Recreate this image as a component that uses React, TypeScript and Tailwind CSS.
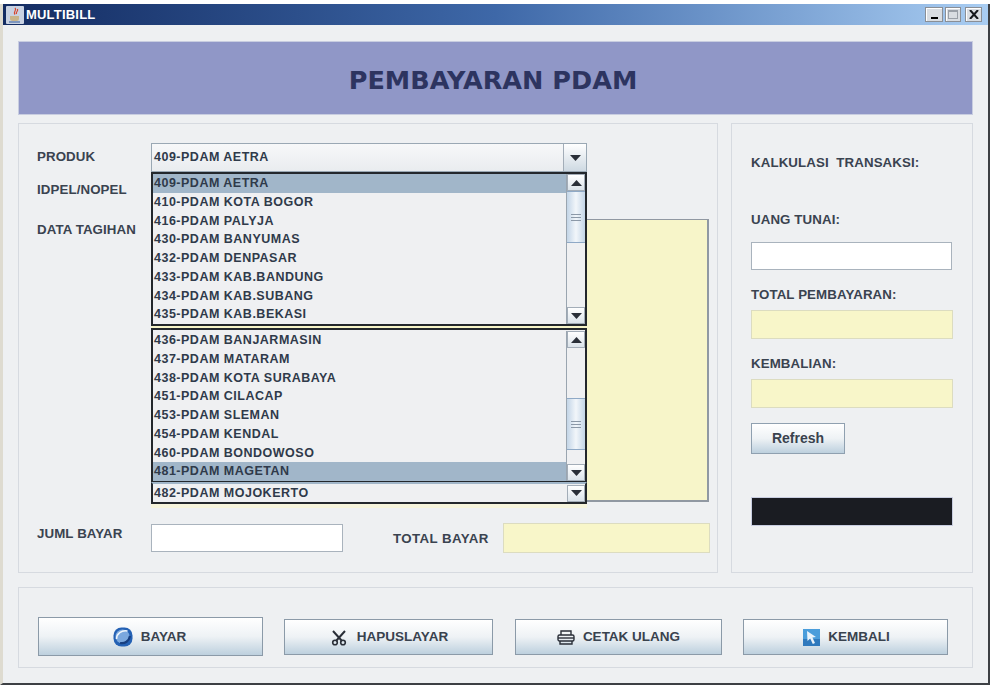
const firstList = [
  '409-PDAM AETRA',
  '410-PDAM KOTA BOGOR',
  '416-PDAM PALYJA',
  '430-PDAM BANYUMAS',
  '432-PDAM DENPASAR',
  '433-PDAM KAB.BANDUNG',
  '434-PDAM KAB.SUBANG',
  '435-PDAM KAB.BEKASI',
]

const secondList = [
  '436-PDAM BANJARMASIN',
  '437-PDAM MATARAM',
  '438-PDAM KOTA SURABAYA',
  '451-PDAM CILACAP',
  '453-PDAM SLEMAN',
  '454-PDAM KENDAL',
  '460-PDAM BONDOWOSO',
  '481-PDAM MAGETAN',
]

const itemText = 'text-[12.5px] font-bold tracking-[0.5px] text-[#2f3a4a] whitespace-nowrap'
const labelText = 'text-[13.3px] font-bold tracking-[0.1px] text-[#3a4350] whitespace-nowrap'

function Arrow({ up = false }: { up?: boolean }) {
  return (
    <svg width="11" height="6" viewBox="0 0 11 6" className={up ? 'rotate-180' : ''}>
      <path d="M0 0h11L5.5 6z" fill="#2a2f38" />
    </svg>
  )
}

function ArrowButton({ up = false, className = '' }: { up?: boolean; className?: string }) {
  return (
    <div className={`flex h-[17px] w-[18px] shrink-0 items-center justify-center border border-[#a3adb8] bg-gradient-to-b from-white to-[#dbe3ea] ${className}`}>
      <Arrow up={up} />
    </div>
  )
}

function Thumb() {
  return (
    <div className="flex h-[52px] w-full flex-col items-center justify-center gap-[2px] border-y border-[#8fa9c6] bg-gradient-to-r from-[#c3d5e7] via-[#f2f6fa] to-[#c3d5e7]">
      <div className="h-px w-[10px] bg-[#8c99a8]" />
      <div className="h-px w-[10px] bg-[#8c99a8]" />
      <div className="h-px w-[10px] bg-[#8c99a8]" />
    </div>
  )
}

function DropList({ items, selected, thumbTop, className }: { items: string[]; selected: string; thumbTop: number; className: string }) {
  return (
    <div className={`absolute left-[132px] flex w-[436px] border-2 border-[#23272c] bg-[#eff0f2] ${className}`}>
      <div className="flex min-w-0 flex-1 flex-col">
        {items.map((item) => (
          <div
            key={item}
            className={`flex h-[18.75px] items-center pl-[1px] ${itemText} ${item === selected ? 'bg-[#a1b6c9]' : ''}`}
          >
            {item}
          </div>
        ))}
      </div>
      <div className="flex w-[19px] flex-col border-l border-[#9aa5b0] bg-[#eff0f2]">
        <ArrowButton up />
        <div className="flex-1">
          <div style={{ marginTop: thumbTop }}>
            <Thumb />
          </div>
        </div>
        <ArrowButton />
      </div>
    </div>
  )
}

function ActionButton({ label, icon, className }: { label: string; icon: React.ReactNode; className: string }) {
  return (
    <button className={`flex items-center justify-center gap-[8px] border border-[#8b9aa8] bg-gradient-to-b from-white via-[#eef2f5] to-[#bdd0de] pt-[1px] text-[13.5px] font-bold text-[#39424e] ${className}`}>
      {icon}
      {label}
    </button>
  )
}

function BayarIcon() {
  return (
    <svg width="20" height="20" viewBox="0 0 20 20" className="-ml-[2px]">
      <rect x="0.5" y="0.5" width="19" height="19" rx="8" fill="#2461b4" />
      <circle cx="9.5" cy="9.5" r="7" fill="#7ba8de" />
      <path d="M3.5 12C3.5 6.5 8.5 3 14.5 4" stroke="#eef5fc" strokeWidth="1.6" fill="none" />
      <path d="M7 16c5 1 9-2 10-7" stroke="#173f80" strokeWidth="2.2" fill="none" />
    </svg>
  )
}

function ScissorsIcon() {
  return (
    <svg width="16" height="16" viewBox="0 0 16 16" fill="none" stroke="#2a2f38" className="ml-[2px] mr-[2px]">
      <path d="M2 1l9 10M14 1L5 11" strokeWidth="2" />
      <circle cx="4" cy="12.500" r="2.300" strokeWidth="1.6" />
      <circle cx="12" cy="12.500" r="2.300" strokeWidth="1.6" />
    </svg>
  )
}

function PrintIcon() {
  return (
    <svg width="18" height="15" viewBox="0 0 18 15" fill="none" stroke="#2a2f38" strokeWidth="1.4">
      <path d="M4 5V1h10v4" />
      <rect x="1" y="5" width="16" height="6" rx="1.5" />
      <path d="M3 11v3h12v-3" />
      <path d="M1 8h16" />
    </svg>
  )
}

function KembaliIcon() {
  return (
    <svg width="17" height="17" viewBox="0 0 17 17" className="ml-[2px]">
      <rect width="17" height="17" fill="#4a9ddb" />
      <rect y="10" width="17" height="7" fill="#2f79bd" />
      <path d="M4 2l9 6-3.600.6L12 14l-2.200 1-2.600-5.400L4.500 12z" fill="#e9f3fb" />
    </svg>
  )
}

function JavaIcon() {
  return (
    <svg width="18" height="18" viewBox="0 0 18 18">
      <rect width="18" height="18" rx="1" fill="#c9d2e2" />
      <path d="M9 2c2.500 2.500-2.500 3.500 0 6.500M11.500 3c1 2.500-2 2.500-1 5" stroke="#d8432b" strokeWidth="1.2" fill="none" />
      <path d="M4 10h9v2.500a2.500 2.500 0 0 1-2.500 2.500h-4A2.500 2.500 0 0 1 4 12.500z" fill="#c8b48a" />
      <path d="M3 16h11" stroke="#4b6fa8" strokeWidth="1.2" />
    </svg>
  )
}

function WinButton({ children, className }: { children: React.ReactNode; className: string }) {
  return (
    <div className={`flex h-[15px] items-center justify-center border border-[#8a8f96] bg-[#d9dde2] shadow-[inset_1px_1px_0_#fff] ${className}`}>
      {children}
    </div>
  )
}

export default function App() {
  return (
    <div className="h-[686px] w-[992px] overflow-hidden bg-white pt-[4px] font-['Liberation_Sans',sans-serif]">
      <div className="flex h-[681px] w-[990px] flex-col border-b-2 border-l-[3px] border-r-2 border-b-[#3d4044] border-l-[#dedbd0] border-r-[#3d4044] bg-[#eef0f2]">
        <div className="flex h-[21px] shrink-0 items-center justify-between bg-gradient-to-r from-[#142c62] via-[#3e68a8] to-[#a9cdf2] pl-[3px] pr-[6px]">
          <div className="flex items-center gap-[2px]">
            <JavaIcon />
            <span className="text-[13px] font-bold tracking-[0.2px] text-white">MULTIBILL</span>
          </div>
          <div className="flex items-center">
            <WinButton className="w-[18px]">
              <div className="mt-[7px] h-[2px] w-[7px] bg-black" />
            </WinButton>
            <WinButton className="ml-[2px] w-[16px]">
              <div className="h-[9px] w-[10px] border border-[#9aa0a8] border-t-2" />
            </WinButton>
            <WinButton className="ml-[4px] w-[17px]">
              <svg width="10" height="9" viewBox="0 0 10 9" stroke="#15181c" strokeWidth="2">
                <path d="M1 0l8 9M9 0L1 9" />
              </svg>
            </WinButton>
          </div>
        </div>

        <div className="flex flex-1 flex-col px-[15px] pt-[16px]">
          <div className="flex h-[74px] shrink-0 items-center justify-center border border-[#c8cde0] bg-[#9097c7] pr-[5px] pt-[5px]">
            <h1 className="font-['DejaVu_Sans',sans-serif] text-[25.5px] font-bold text-[#2d3460]">PEMBAYARAN PDAM</h1>
          </div>

          <div className="mt-[8px] flex h-[450px] gap-[13px]">
            <div className="relative w-[700px] shrink-0 border border-[#d6dae0] pl-[18px] pt-[19px]">
              <div className="flex items-center">
                <div className={`mb-[2px] w-[114px] ${labelText}`}>PRODUK</div>
                <div className="flex h-[29px] w-[436px] items-center justify-between border border-[#9aa8b4] bg-gradient-to-b from-[#f7f8f9] to-[#e9ecef] pl-[2px]">
                  <span className={itemText}>409-PDAM AETRA</span>
                  <div className="flex h-full w-[23px] items-center justify-center border-l border-[#a3adb8] bg-gradient-to-b from-white to-[#ced9e2]">
                    <Arrow />
                  </div>
                </div>
              </div>
              <div className={`mt-[8px] ${labelText}`}>IDPEL/NOPEL</div>
              <div className="mt-[20px] flex items-start">
                <div className={`w-[114px] ${labelText}`}>DATA TAGIHAN</div>
              </div>

              <div className="absolute left-[132px] top-[95px] h-[283px] w-[558px] border-b-2 border-r-2 border-t border-[#9098a2] bg-[#f7f5c9]" />

              <DropList items={firstList} selected="409-PDAM AETRA" thumbTop={0} className="top-[48px] h-[154px]" />
              <DropList items={secondList} selected="481-PDAM MAGETAN" thumbTop={50} className="top-[204px] h-[155px] pt-[1px]" />
              <div className="absolute left-[132px] top-[358px] flex h-[22px] w-[436px] items-center justify-between border-2 border-[#23272c] border-t-[#a1b6c9] bg-[#eff0f2] pl-[1px]">
                <span className={`pt-[1px] ${itemText}`}>482-PDAM MOJOKERTO</span>
                <ArrowButton />
              </div>
              <div className="absolute left-[132px] top-[380px] h-[4px] w-[436px] bg-[#f6f4dc]" />

              <div className="absolute bottom-[19px] left-[18px] flex items-center">
                <div className={`mb-[8px] w-[114px] ${labelText}`}>JUML BAYAR</div>
                <div className="h-[28px] w-[192px] border border-[#a9b3bd] bg-white" />
                <div className={`ml-[50px] mt-[2px] w-[110px] tracking-[0.4px] ${labelText}`}>TOTAL BAYAR</div>
                <div className="h-[30px] w-[207px] border border-[#dcdcc0] bg-[#f8f6c9]" />
              </div>
            </div>

            <div className="flex flex-1 flex-col border border-[#d6dae0] pl-[19px] pr-[19px] pt-[29px]">
              <div className={labelText}>KALKULASI&nbsp; TRANSAKSI:</div>
              <div className={`mt-[37px] ${labelText}`}>UANG TUNAI:</div>
              <div className="mt-[12px] h-[28px] w-[201px] border border-[#a9b3bd] bg-white" />
              <div className={`mt-[15px] ${labelText}`}>TOTAL PEMBAYARAN:</div>
              <div className="mt-[5px] h-[29px] w-[202px] border border-[#dcdcc0] bg-[#f8f6c9]" />
              <div className={`mt-[15px] ${labelText}`}>KEMBALIAN:</div>
              <div className="mt-[5px] h-[29px] w-[202px] border border-[#dcdcc0] bg-[#f8f6c9]" />
              <button className="mt-[15px] h-[31px] w-[94px] border border-[#8fa0b0] bg-gradient-to-b from-white via-[#eef2f5] to-[#bdd0de] text-[14px] font-bold text-[#39424e]">
                Refresh
              </button>
              <div className="mt-[43px] h-[29px] w-[202px] border border-[#c8cde0] bg-[#1a1c22]" />
            </div>
          </div>

          <div className="mt-[14px] flex h-[81px] items-start border border-[#d6dae0] pl-[19px] pt-[29px]">
            <ActionButton label="BAYAR" icon={<BayarIcon />} className="h-[39px] w-[225px]" />
            <ActionButton label="HAPUSLAYAR" icon={<ScissorsIcon />} className="ml-[21px] mt-[2px] h-[36px] w-[209px]" />
            <ActionButton label="CETAK ULANG" icon={<PrintIcon />} className="ml-[22px] mt-[2px] h-[36px] w-[207px]" />
            <ActionButton label="KEMBALI" icon={<KembaliIcon />} className="ml-[21px] mt-[2px] h-[36px] w-[205px]" />
          </div>
        </div>
      </div>
    </div>
  )
}
